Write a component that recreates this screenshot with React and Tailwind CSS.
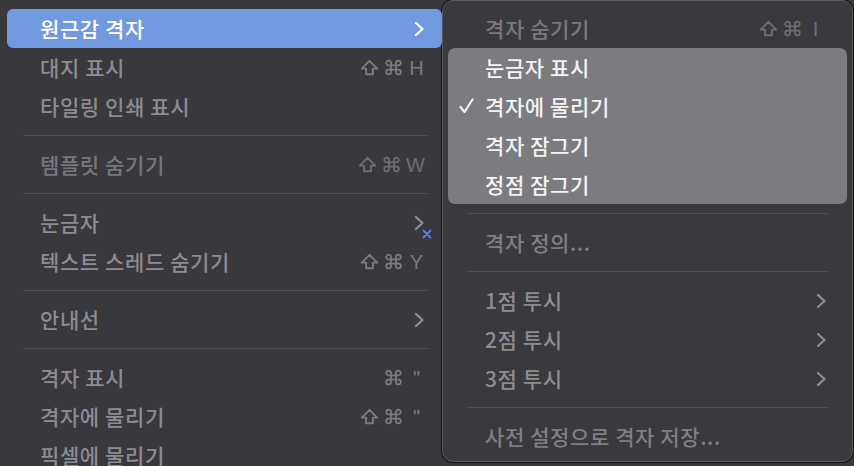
import React from "react";

const leftItems = [
  { label: "원근감 격자", active: true, sub: true },
  { label: "대지 표시", keys: ["shift", "cmd", "H"] },
  { label: "타일링 인쇄 표시" },
  { sep: true },
  { label: "템플릿 숨기기", keys: ["shift", "cmd", "W"], dim: true },
  { sep: true },
  { label: "눈금자", sub: true, cursor: true },
  { label: "텍스트 스레드 숨기기", keys: ["shift", "cmd", "Y"] },
  { sep: true },
  { label: "안내선", sub: true },
  { sep: true },
  { label: "격자 표시", keys: [null, "cmd", "\""] },
  { label: "격자에 물리기", keys: ["shift", "cmd", "\""] },
  { label: "픽셀에 물리기" },
];

const subTop = { label: "격자 숨기기", keys: ["shift", "cmd", "I"], dim: true };
const subGroup = [
  { label: "눈금자 표시" },
  { label: "격자에 물리기", checked: true },
  { label: "격자 잠그기" },
  { label: "정점 잠그기" },
];
const subRest = [
  { sep: true },
  { label: "격자 정의...", dim: true },
  { sep: true },
  { label: "1점 투시", sub: true },
  { label: "2점 투시", sub: true },
  { label: "3점 투시", sub: true },
  { sep: true },
  { label: "사전 설정으로 격자 저장...", dim: true },
];

function Chevron() {
  return (
    <svg width="12" height="16" viewBox="0 0 12 16" className="shrink-0">
      <path d="M3 2 L9.5 8 L3 14" fill="none" stroke="currentColor" strokeWidth="2.3" strokeLinecap="round" strokeLinejoin="round" />
    </svg>
  );
}

function ShiftIcon() {
  return (
    <svg width="19" height="17" viewBox="0 0 19 17">
      <path d="M9.5 1.8 L17.2 9.6 H12.9 V15.2 H6.1 V9.6 H1.8 Z" fill="none" stroke="currentColor" strokeWidth="1.9" strokeLinejoin="round" />
    </svg>
  );
}

function CmdIcon() {
  return (
    <svg width="17" height="17" viewBox="0 0 17 17">
      <path
        d="M6 6 V4 A2.4 2.4 0 1 0 3.6 6.4 H13.4 A2.4 2.4 0 1 0 11 4 V13 A2.4 2.4 0 1 0 13.4 10.6 H3.6 A2.4 2.4 0 1 0 6 13 Z"
        fill="none" stroke="currentColor" strokeWidth="1.8" strokeLinejoin="round"
      />
    </svg>
  );
}

function Keys({ keys }) {
  return (
    <div className="flex items-center gap-[6px]">
      <span className="w-[19px] flex justify-center">{keys[0] && <ShiftIcon />}</span>
      <CmdIcon />
      <span className="min-w-[17px] text-center text-[20px] leading-none font-['Liberation_Sans',sans-serif]">{keys[2]}</span>
    </div>
  );
}

function Row({ item, pad, tone }) {
  return (
    <div className={`relative h-[39px] flex items-center rounded-[6px] ${pad} ${tone} ${item.active ? "bg-[#7099df]" : ""}`}>
      {item.checked && (
        <svg width="15" height="16" viewBox="0 0 15 16" className="absolute left-[11px] top-[11px]">
          <path d="M1.5 9 L5.5 14 L13.5 1.5" fill="none" stroke="#f2f2f4" strokeWidth="2.2" strokeLinecap="round" strokeLinejoin="round" />
        </svg>
      )}
      <span className="flex-1 text-[21px] tracking-[0.6px] font-medium leading-none whitespace-nowrap">{item.label}</span>
      {item.keys && (
        <div className={item.dim ? "text-[#6e6d72]" : "text-[#7b7a7f]"}>
          <Keys keys={item.keys} />
        </div>
      )}
      {item.sub && <Chevron />}
      {item.cursor && (
        <svg width="10" height="10" viewBox="0 0 10 10" className="absolute right-[10px] top-[26px]">
          <path d="M1.5 1.5 L8.5 8.5 M8.5 1.5 L1.5 8.5" stroke="#5f7ff2" strokeWidth="1.8" strokeLinecap="round" />
        </svg>
      )}
    </div>
  );
}

function Sep({ inset }) {
  return (
    <div className={`h-[19px] flex items-center ${inset}`}>
      <div className="h-px w-full bg-[#504f54]" />
    </div>
  );
}

export default function App() {
  return (
    <div className="w-[854px] h-[466px] bg-[#39383d] flex overflow-hidden font-['Noto_Sans_CJK_KR','Noto_Sans',sans-serif]">
      {/* main menu */}
      <div className="w-[442px] shrink-0 pt-[9px] pl-[7px]">
        {leftItems.map((it, i) =>
          it.sep ? (
            <Sep key={i} inset="pl-[16px] pr-[14px]" />
          ) : (
            <Row
              key={i}
              item={it}
              pad="pl-[33px] pr-[17px]"
              tone={it.active ? "text-white" : it.dim ? "text-[#78777c]" : "text-[#8d8c91]"}
            />
          )
        )}
      </div>

      {/* submenu */}
      <div className="w-[411px] h-[462px] shrink-0 rounded-[11px] border border-[#5a595e] ring-1 ring-[#151517] bg-[#3a393e] px-[5px] pt-[8px] pb-[6px]">
        <Row item={subTop} pad="pl-[37px] pr-[23px]" tone="text-[#7a797e]" />
        <div className="rounded-[7px] bg-[#7c7b80]">
          {subGroup.map((it, i) => (
            <Row key={i} item={it} pad="pl-[37px] pr-[22px]" tone="text-[#f4f4f6]" />
          ))}
        </div>
        {subRest.map((it, i) =>
          it.sep ? (
            <Sep key={i} inset="px-[19px]" />
          ) : (
            <Row
              key={i}
              item={it}
              pad="pl-[37px] pr-[20px]"
              tone={it.dim ? "text-[#807f84]" : "text-[#8d8c91]"}
            />
          )
        )}
      </div>
    </div>
  );
}
